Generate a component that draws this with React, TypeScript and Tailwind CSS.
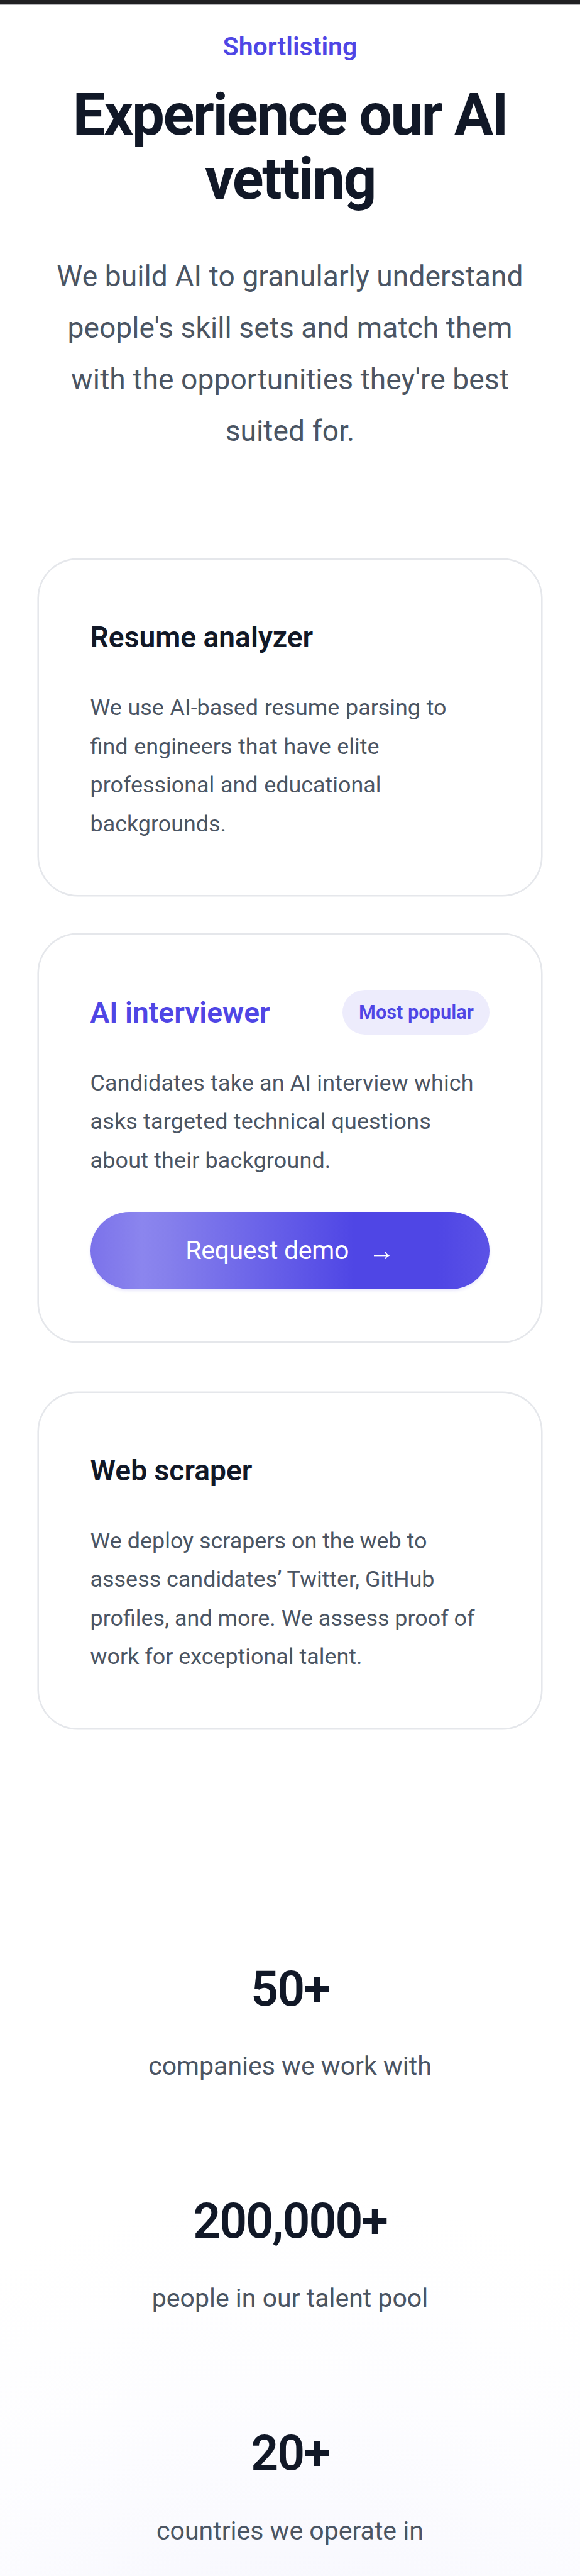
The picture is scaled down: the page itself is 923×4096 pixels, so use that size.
import { ReactNode } from 'react';

interface CardProps {
  title: string;
  featured?: boolean;
  className?: string;
  textClassName?: string;
  children: ReactNode;
  action?: ReactNode;
}

const stats = [
  { id: 1, name: 'companies we work with', value: '50+' },
  { id: 2, name: 'people in our talent pool', value: '200,000+' },
  { id: 3, name: 'countries we operate in', value: '20+' },
];

const ArrowRight = () => (
  <svg
    viewBox="0 0 10 5"
    className="mt-[5.6px] mr-[2.9px] h-[5px] w-[10px]"
    fill="none"
  >
    <path d="M0 2.5H8.6" stroke="currentColor" strokeWidth="0.75" />
    <path
      d="M6.8 0.6L7.3 0.3Q8.1 1.8 9.8 2.5Q8.1 3.2 7.3 4.7L6.8 4.4Q7.3 3.3 8 2.5Q7.3 1.7 6.8 0.6Z"
      fill="currentColor"
    />
  </svg>
);

const Card = ({
  title,
  featured,
  className,
  textClassName,
  children,
  action,
}: CardProps) => (
  <div className={`rounded-3xl p-8 ring-1 ring-gray-200 ${className || ''}`}>
    <div className="flex h-8 items-center justify-between">
      <h3
        className={`text-lg leading-8 font-semibold ${
          featured ? 'text-[#4f46e5]' : 'text-[#111827]'
        }`}
      >
        {title}
      </h3>
      {featured && (
        <p className="rounded-full bg-[#4f46e5]/10 px-2.5 py-1 text-xs leading-5 font-semibold whitespace-nowrap text-[#4f46e5]">
          Most popular
        </p>
      )}
    </div>
    <p
      className={`mt-4 text-sm leading-6 text-[#4b5563] ${textClassName || ''}`}
    >
      {children}
    </p>
    {action}
  </div>
);

export function App() {
  return (
    <div className="h-[4096px] w-full overflow-hidden bg-white">
      <div className="h-[1597.6px] w-[360px] bg-[radial-gradient(circle_at_50%_1770px,#f3f3fd_0px,#f9f9fe_190px,#fdfdff_290px,#ffffff_410px)] font-['Roboto',sans-serif] [zoom:2.5639]">
        <div className="h-[3px] border-b border-[#b4b4b8] bg-[#202022]" />
        <div className="px-6 pt-[12.3px]">
          <div className="text-center">
            <h2 className="text-base leading-7 font-semibold text-[#4f46e5]">
              Shortlisting
            </h2>
            <p className="mt-2 text-4xl leading-10 font-bold tracking-tight text-[#111827]">
              Experience our AI vetting
            </p>
          </div>
          <p className="mt-6 text-center text-lg leading-8 tracking-[0.03px] text-[#4b5563]">
            We build AI to granularly understand people's skill sets and match
            them with the opportunities they're best suited for.
          </p>

          <div className="mt-[63.9px]">
            <Card
              title="Resume analyzer"
              textClassName="[word-spacing:0.3px]"
            >
              We use AI-based resume parsing to
              <br />
              find engineers that have elite
              <br />
              professional and educational backgrounds.
            </Card>
            <Card
              title="AI interviewer"
              featured
              className="mt-[24.6px]"
              textClassName="tracking-[0.07px]"
              action={
                <button className="mt-5 flex h-12 w-full items-center justify-center gap-[15.5px] rounded-full bg-[linear-gradient(90deg,#7b72ea_0%,#8b85ee_13%,#8680ec_19%,#4f46e5_66%,#4f46e5_87%,#5b52e6_100%)] text-base tracking-[-0.13px] text-white shadow-[0_1px_2px_rgba(79,70,229,0.12)]">
                  Request demo
                  <ArrowRight />
                </button>
              }
            >
              Candidates take an AI interview which asks targeted technical
              questions about their background.
            </Card>
            <Card title="Web scraper" className="mt-8">
              We deploy scrapers on the web to assess candidates’ Twitter,
              GitHub profiles, and more. We assess proof of work for exceptional
              talent.
            </Card>
          </div>

          <dl className="mt-36 flex flex-col gap-16 text-center">
            {stats.map((stat) => (
              <div key={stat.id} className="flex flex-col gap-4">
                <dt className="text-base leading-7 text-[#4b5563]">
                  {stat.name}
                </dt>
                <dd className="order-first text-3xl leading-9 font-semibold tracking-tight text-[#111827]">
                  {stat.value}
                </dd>
              </div>
            ))}
          </dl>
        </div>
      </div>
    </div>
  );
}

export default App;
